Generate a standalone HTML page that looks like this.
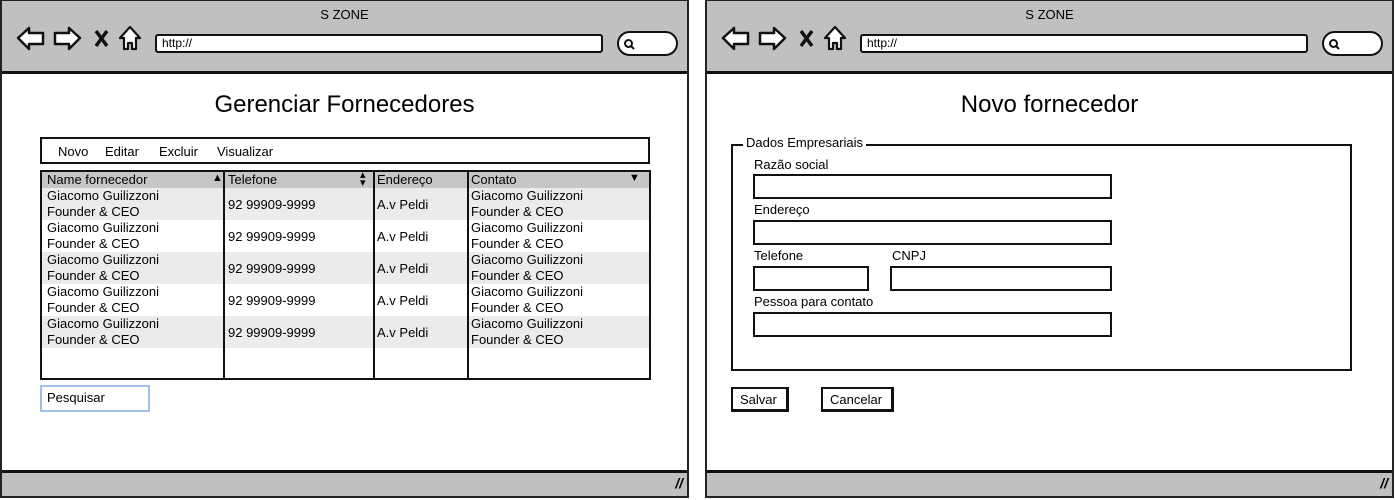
<!DOCTYPE html>
<html><head><meta charset="utf-8"><style>
*{margin:0;padding:0;box-sizing:border-box}
body{width:1395px;height:500px;background:#fff;position:relative;overflow:hidden;font-family:"Liberation Sans",sans-serif;color:#000}
.a{position:absolute}
.win{position:absolute;top:-1px;width:689px;height:499px;border:2px solid #222;background:#fff}
.top{position:absolute;left:0;top:0;right:0;height:73px;background:#c0c0c0;border-bottom:3px solid #111}
.bot{position:absolute;left:0;bottom:0;right:0;height:26px;background:#c0c0c0;border-top:3px solid #111}
.title{position:absolute;top:6px;left:0;right:0;text-align:center;font-size:13px}
.url{position:absolute;left:153px;top:33px;width:448px;height:19px;background:#fff;border:2px solid #111;border-radius:3px;font-size:12px;padding-left:5px;line-height:15px}
.srch{position:absolute;left:615px;top:30px;width:61px;height:25px;background:#fff;border:2px solid #111;border-radius:13px}
.t{font-size:13px;line-height:16px;white-space:nowrap}
.box{position:absolute;border:2px solid #111;background:#fff}
</style></head><body>

<!-- Window 1 -->
<div class="win" style="left:0">
 <div class="top">
  <div class="title">S ZONE</div>
  <svg class="a" style="left:12px;top:24px" width="130" height="28" viewBox="0 0 130 28">
   <path d="M4 13 L15 3 L15 8 L29 8 L29 19 L15 19 L15 24 Z" fill="#fff" stroke="#111" stroke-width="2.5" stroke-linejoin="round"/>
   <path d="M66 13 L55 3 L55 8 L41 8 L41 19 L55 19 L55 24 Z" fill="#fff" stroke="#111" stroke-width="2.5" stroke-linejoin="round"/>
   <path d="M82 6 L93 21 M93 6 L82 21" stroke="#111" stroke-width="3.5"/>
   <path d="M116 2 L106 13 L110 13 L110 24 L114 24 L114 18 L118 18 L118 24 L122 24 L122 13 L126 13 Z" fill="#fff" stroke="#111" stroke-width="2.2" stroke-linejoin="round"/>
  </svg>
  <div class="url">http://</div>
  <div class="srch"><svg class="a" style="left:4px;top:5px" width="12" height="12"><circle cx="5.5" cy="5.5" r="3.5" fill="none" stroke="#111" stroke-width="2"/><path d="M8 8 L11 11" stroke="#111" stroke-width="2"/></svg></div>
 </div>
 <div class="a" style="left:0;right:0;top:90px;text-align:center;font-size:24px">Gerenciar Fornecedores</div>
 <div class="box" style="left:38px;top:136px;width:610px;height:27px">
  <div class="a t" style="left:16px;top:5px">Novo</div>
  <div class="a t" style="left:63px;top:5px">Editar</div>
  <div class="a t" style="left:117px;top:5px">Excluir</div>
  <div class="a t" style="left:175px;top:5px">Visualizar</div>
 </div>
 <div class="box" style="left:38px;top:169px;width:611px;height:210px;overflow:hidden">
  <div class="a" style="left:0;right:0;top:0;height:16px;background:#c6c6c6"></div>
  <div class="a" style="left:0;right:0;top:16px;height:32px;background:#ebebeb"></div>
  <div class="a" style="left:0;right:0;top:80px;height:32px;background:#ebebeb"></div>
  <div class="a" style="left:0;right:0;top:144px;height:32px;background:#ebebeb"></div>
  <div class="a t" style="left:5px;top:0">Name fornecedor</div>
  <div class="a" style="left:170px;top:0;font-size:11px">▲</div>
  <div class="a t" style="left:186px;top:0">Telefone</div>
  <div class="a" style="left:318px;top:-1px;font-size:11px;line-height:8px">▴<br>▾</div>
  <div class="a t" style="left:335px;top:0">Endereço</div>
  <div class="a t" style="left:429px;top:0">Contato</div>
  <div class="a" style="left:587px;top:0;font-size:11px">▼</div>
  <div class="a" style="left:181px;top:0;bottom:0;width:2px;background:#111"></div>
  <div class="a" style="left:331px;top:0;bottom:0;width:2px;background:#111"></div>
  <div class="a" style="left:425px;top:0;bottom:0;width:2px;background:#111"></div>
  <div class="a t" style="left:5px;top:16px">Giacomo Guilizzoni<br>Founder &amp; CEO</div>
  <div class="a t" style="left:5px;top:48px">Giacomo Guilizzoni<br>Founder &amp; CEO</div>
  <div class="a t" style="left:5px;top:80px">Giacomo Guilizzoni<br>Founder &amp; CEO</div>
  <div class="a t" style="left:5px;top:112px">Giacomo Guilizzoni<br>Founder &amp; CEO</div>
  <div class="a t" style="left:5px;top:144px">Giacomo Guilizzoni<br>Founder &amp; CEO</div>
  <div class="a t" style="left:429px;top:16px">Giacomo Guilizzoni<br>Founder &amp; CEO</div>
  <div class="a t" style="left:429px;top:48px">Giacomo Guilizzoni<br>Founder &amp; CEO</div>
  <div class="a t" style="left:429px;top:80px">Giacomo Guilizzoni<br>Founder &amp; CEO</div>
  <div class="a t" style="left:429px;top:112px">Giacomo Guilizzoni<br>Founder &amp; CEO</div>
  <div class="a t" style="left:429px;top:144px">Giacomo Guilizzoni<br>Founder &amp; CEO</div>
  <div class="a t" style="left:186px;top:25px">92 99909-9999</div>
  <div class="a t" style="left:186px;top:57px">92 99909-9999</div>
  <div class="a t" style="left:186px;top:89px">92 99909-9999</div>
  <div class="a t" style="left:186px;top:121px">92 99909-9999</div>
  <div class="a t" style="left:186px;top:153px">92 99909-9999</div>
  <div class="a t" style="left:335px;top:25px">A.v Peldi</div>
  <div class="a t" style="left:335px;top:57px">A.v Peldi</div>
  <div class="a t" style="left:335px;top:89px">A.v Peldi</div>
  <div class="a t" style="left:335px;top:121px">A.v Peldi</div>
  <div class="a t" style="left:335px;top:153px">A.v Peldi</div>
 </div>
 <div class="a" style="left:38px;top:384px;width:110px;height:27px;border:2px solid #9ec0ef;background:#fff">
  <div class="a t" style="left:5px;top:3px">Pesquisar</div>
 </div>
 <div class="bot"><div class="a" style="right:4px;top:2px;font-size:14px;font-weight:bold;font-style:italic">//</div></div>
</div>

<!-- Window 2 -->
<div class="win" style="left:705px">
 <div class="top">
  <div class="title">S ZONE</div>
  <svg class="a" style="left:12px;top:24px" width="130" height="28" viewBox="0 0 130 28">
   <path d="M4 13 L15 3 L15 8 L29 8 L29 19 L15 19 L15 24 Z" fill="#fff" stroke="#111" stroke-width="2.5" stroke-linejoin="round"/>
   <path d="M66 13 L55 3 L55 8 L41 8 L41 19 L55 19 L55 24 Z" fill="#fff" stroke="#111" stroke-width="2.5" stroke-linejoin="round"/>
   <path d="M82 6 L93 21 M93 6 L82 21" stroke="#111" stroke-width="3.5"/>
   <path d="M116 2 L106 13 L110 13 L110 24 L114 24 L114 18 L118 18 L118 24 L122 24 L122 13 L126 13 Z" fill="#fff" stroke="#111" stroke-width="2.2" stroke-linejoin="round"/>
  </svg>
  <div class="url">http://</div>
  <div class="srch"><svg class="a" style="left:4px;top:5px" width="12" height="12"><circle cx="5.5" cy="5.5" r="3.5" fill="none" stroke="#111" stroke-width="2"/><path d="M8 8 L11 11" stroke="#111" stroke-width="2"/></svg></div>
 </div>
 <div class="a" style="left:0;right:0;top:90px;text-align:center;font-size:24px">Novo fornecedor</div>
 <div class="a" style="left:24px;top:143px;width:621px;height:227px;border:2px solid #111"></div>
 <div class="a t" style="left:36px;top:134px;background:#fff;padding:0 3px">Dados Empresariais</div>
 <div class="a t" style="left:47px;top:156px">Razão social</div>
 <div class="box" style="left:46px;top:173px;width:359px;height:25px"></div>
 <div class="a t" style="left:47px;top:201px">Endereço</div>
 <div class="box" style="left:46px;top:219px;width:359px;height:25px"></div>
 <div class="a t" style="left:47px;top:247px">Telefone</div>
 <div class="a t" style="left:185px;top:247px">CNPJ</div>
 <div class="box" style="left:46px;top:265px;width:116px;height:25px"></div>
 <div class="box" style="left:183px;top:265px;width:222px;height:25px"></div>
 <div class="a t" style="left:47px;top:293px">Pessoa para contato</div>
 <div class="box" style="left:46px;top:311px;width:359px;height:25px"></div>
 <div class="box" style="left:24px;top:386px;width:58px;height:25px;border-right-width:3px;border-bottom-width:3px"><div class="a t" style="left:7px;top:3px">Salvar</div></div>
 <div class="box" style="left:114px;top:386px;width:73px;height:25px;border-right-width:3px;border-bottom-width:3px"><div class="a t" style="left:7px;top:3px">Cancelar</div></div>
 <div class="bot"><div class="a" style="right:4px;top:2px;font-size:14px;font-weight:bold;font-style:italic">//</div></div>
</div>
</body></html>
